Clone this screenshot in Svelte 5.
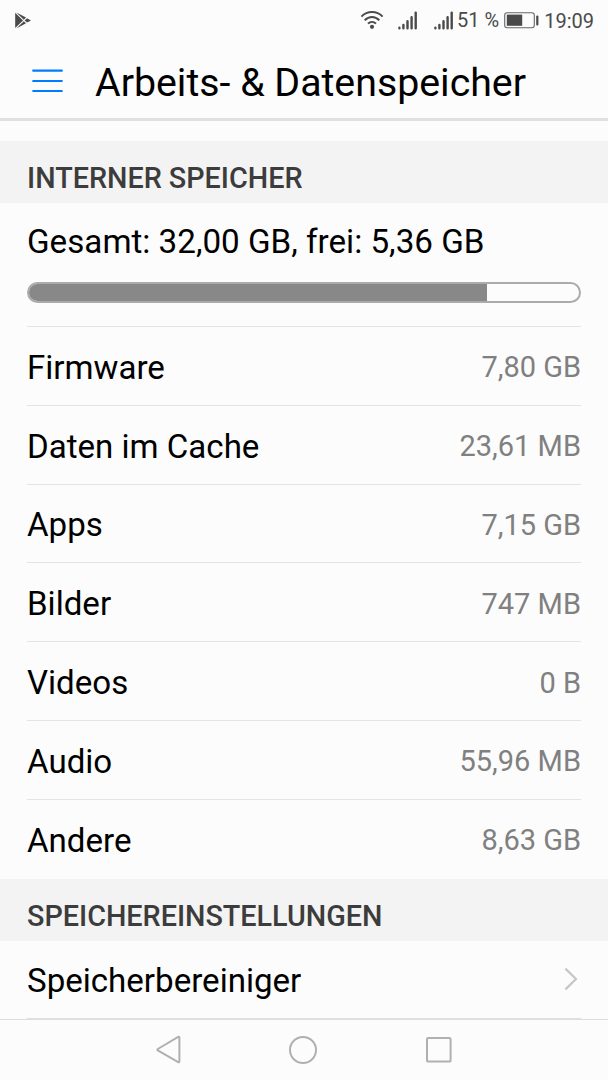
<script lang="ts">
	interface Usage {
		label: string;
		size: string;
	}

	const usages: Usage[] = [
		{ label: 'Firmware', size: '7,80 GB' },
		{ label: 'Daten im Cache', size: '23,61 MB' },
		{ label: 'Apps', size: '7,15 GB' },
		{ label: 'Bilder', size: '747 MB' },
		{ label: 'Videos', size: '0 B' },
		{ label: 'Audio', size: '55,96 MB' },
		{ label: 'Andere', size: '8,63 GB' }
	];

	const total = 32;
	const free = 5.36;

	let usedPercent = $derived(((total - free) / total) * 100);

	function formatGb(value: number): string {
		return value.toFixed(2).replace('.', ',') + ' GB';
	}
</script>

{#snippet signal()}
	<svg class="signal" width="20" height="19" viewBox="0 0 20 19" fill="none" stroke="#4a4a4a" stroke-width="2.4" stroke-linecap="round">
		<path d="M1.4 16.8v.4M5.4 14v3.2M9.5 10.2v7M13.6 6.2v11M17.7 1.6v15.6" />
	</svg>
{/snippet}

<div class="screen">
	<div class="status-bar">
		<svg class="play" width="17" height="17" viewBox="0 0 17 17">
			<path d="M.2.8 8 8.4.2 16.1z" fill="#4a4a4a" />
			<path d="M1.4.4 11 5.6 8.8 7.7zM1.4 16.4 11 11.2 8.8 9.2z" fill="#4a4a4a" />
			<path d="M9.7 8.4 12 6.2 16 8.4 12 10.6z" fill="#4a4a4a" />
		</svg>
		<div class="status-right">
			<svg class="wifi" width="24" height="20" viewBox="0 0 24 20" fill="none" stroke="#4a4a4a" stroke-width="2">
				<path d="M1.4 6.6C7.4.6 16.6.6 22.6 6.6M4.7 10.3C9 6 15 6 19.3 10.3M8 13.6C10.3 11.3 13.7 11.3 16 13.6" />
				<circle cx="12" cy="16.8" r="2.1" fill="#4a4a4a" stroke="none" />
			</svg>
			{@render signal()}
			{@render signal()}
			<span class="percent">51 %</span>
			<svg class="battery" width="35" height="17" viewBox="0 0 35 17">
				<rect x=".7" y=".7" width="29.6" height="15" rx="2.4" fill="none" stroke="#666" stroke-width="1.1" />
				<rect x="2.8" y="2.6" width="15.4" height="11.2" fill="#4a4a4a" />
				<rect x="32.2" y="3.4" width="2.2" height="10" rx="1" fill="#4a4a4a" />
			</svg>
			<span class="clock">19:09</span>
		</div>
	</div>

	<header>
		<svg class="menu" width="32" height="26" viewBox="0 0 32 26" stroke="#007dff" stroke-width="2.2" stroke-linecap="round">
			<path d="M1.2 2.7h28.6M1.2 13h28.6M1.2 23h28.6" />
		</svg>
		<h1>Arbeits- &amp; Datenspeicher</h1>
	</header>

	<main>
		<h2 class="section">INTERNER SPEICHER</h2>
		<div class="summary">
			<p>Gesamt: {formatGb(total)}, frei: {formatGb(free)}</p>
			<div class="bar">
				<div class="bar-used" style="width: {usedPercent}%"></div>
			</div>
		</div>
		<ul>
			{#each usages as usage (usage.label)}
				<li>
					<span class="label">{usage.label}</span>
					<span class="size">{usage.size}</span>
				</li>
			{/each}
		</ul>

		<h2 class="section">SPEICHEREINSTELLUNGEN</h2>
		<div class="link-row">
			<span class="label">Speicherbereiniger</span>
			<svg width="17" height="26" viewBox="0 0 17 26" fill="none" stroke="#c6c6c6" stroke-width="2.2">
				<path d="M1.4 2.6 12 13 1.4 23.4" />
			</svg>
		</div>
	</main>

	<nav>
		<svg width="26" height="30" viewBox="0 0 26 30">
			<path d="M2.8 14 23.2 2q1.2-.6 1.2.8v23.4q0 1.4-1.2.8L2.8 15.4q-1-.7 0-1.4z" />
		</svg>
		<svg width="30" height="30" viewBox="0 0 30 30">
			<circle cx="15" cy="15" r="13" />
		</svg>
		<svg width="28" height="28" viewBox="0 0 28 28">
			<rect x="2" y="2" width="23.6" height="23.6" rx="1.2" />
		</svg>
	</nav>
</div>

<style>
	:global(body) {
		margin: 0;
		background: #fcfcfc;
	}

	.screen {
		display: flex;
		flex-direction: column;
		width: 608px;
		height: 1080px;
		overflow: hidden;
		background: #fcfcfc;
		color: #000;
		font-family: Roboto, sans-serif;
	}

	.status-bar {
		display: flex;
		flex-shrink: 0;
		align-items: center;
		justify-content: space-between;
		box-sizing: border-box;
		height: 40px;
		padding: 0 14px 0 15px;
		color: #4a4a4a;
		font-size: 20px;
	}
	.status-right {
		display: flex;
		align-items: center;
	}
	.wifi {
		margin-right: 14px;
	}
	.signal {
		margin-right: 16px;
	}
	.signal + .signal {
		margin-right: 3px;
	}
	.battery {
		margin: 0 5px;
	}
	.clock {
		padding-top: 2px;
	}

	header {
		display: flex;
		flex-shrink: 0;
		align-items: center;
		box-sizing: border-box;
		height: 81px;
		padding: 3px 0 0 32px;
		border-bottom: 3px solid #e0e0e0;
	}
	h1 {
		margin: 4px 0 0 31px;
		font-size: 39.3px;
		font-weight: 400;
		white-space: nowrap;
	}

	main {
		flex: 1;
		min-height: 0;
		padding-top: 20px;
	}
	.section {
		display: flex;
		align-items: center;
		box-sizing: border-box;
		height: 62px;
		margin: 0;
		padding: 12px 27px 0;
		background: #f3f3f3;
		color: #3c3c3c;
		font-size: 28.75px;
		font-weight: 500;
	}

	.summary {
		box-sizing: border-box;
		height: 123px;
		padding: 19px 27px 0;
	}
	.summary p {
		margin: 0;
		font-size: 33.2px;
		line-height: 40px;
		white-space: nowrap;
	}
	.bar {
		box-sizing: border-box;
		height: 21px;
		margin-top: 20px;
		overflow: hidden;
		border: 2px solid #ababab;
		border-radius: 11px;
	}
	.bar-used {
		height: 100%;
		background: #888;
	}

	ul {
		margin: 0;
		padding: 0 27px 1px;
		list-style: none;
	}
	li {
		display: flex;
		align-items: center;
		justify-content: space-between;
		box-sizing: border-box;
		height: 78.8px;
		padding-top: 3px;
		border-top: 1px solid #e4e4e4;
	}
	.label {
		font-size: 33.1px;
	}
	.size {
		color: #808080;
		font-size: 29px;
	}

	.link-row {
		display: flex;
		align-items: center;
		justify-content: space-between;
		box-sizing: border-box;
		height: 78px;
		margin: 0 27px;
		border-bottom: 1px solid #e0e0e0;
	}
	.link-row .label {
		padding-top: 3px;
	}

	nav {
		display: flex;
		flex-shrink: 0;
		align-items: center;
		justify-content: center;
		gap: 107px;
		box-sizing: border-box;
		height: 61px;
		border-top: 1px solid #dedede;
	}
	nav svg {
		fill: none;
		stroke: #b0b0b0;
		stroke-width: 2;
	}
</style>
